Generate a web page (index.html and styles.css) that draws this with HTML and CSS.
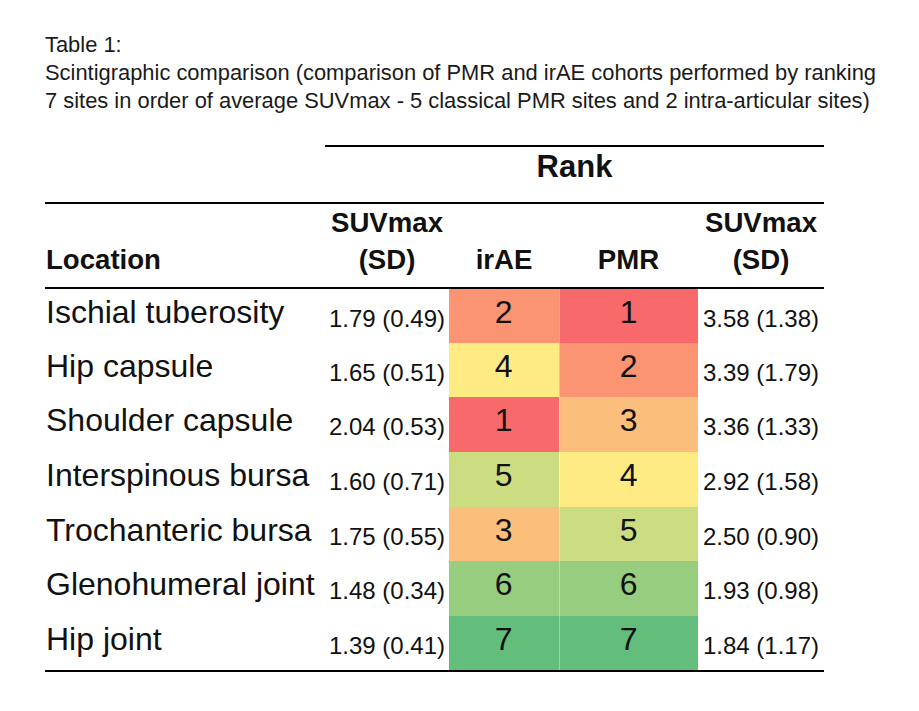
FILE: index.html
```html
<!DOCTYPE html>
<html lang="en">
<head>
<meta charset="utf-8">
<title>Table 1</title>
<link rel="stylesheet" href="styles.css">
</head>
<body>
<div class="caption">
  <div>Table 1:</div>
  <div>Scintigraphic comparison (comparison of PMR and irAE cohorts performed by ranking</div>
  <div>7 sites in order of average SUVmax - 5 classical PMR sites and 2 intra-articular sites)</div>
</div>
<table class="data">
  <colgroup>
    <col class="c-loc">
    <col class="c-suv1">
    <col class="c-irae">
    <col class="c-pmr">
    <col class="c-suv2">
  </colgroup>
  <thead>
    <tr class="spanrow">
      <th class="blank"></th>
      <th class="rank" colspan="4">Rank</th>
    </tr>
    <tr class="headrow">
      <th class="h-loc">Location</th>
      <th>SUVmax<br>(SD)</th>
      <th>irAE</th>
      <th>PMR</th>
      <th>SUVmax<br>(SD)</th>
    </tr>
  </thead>
  <tbody>
    <tr>
      <td class="loc">Ischial tuberosity</td>
      <td class="num">1.79 (0.49)</td>
      <td class="rk r2">2</td>
      <td class="rk pm r1">1</td>
      <td class="num">3.58 (1.38)</td>
    </tr>
    <tr>
      <td class="loc">Hip capsule</td>
      <td class="num">1.65 (0.51)</td>
      <td class="rk r4">4</td>
      <td class="rk pm r2">2</td>
      <td class="num">3.39 (1.79)</td>
    </tr>
    <tr>
      <td class="loc">Shoulder capsule</td>
      <td class="num">2.04 (0.53)</td>
      <td class="rk r1">1</td>
      <td class="rk pm r3">3</td>
      <td class="num">3.36 (1.33)</td>
    </tr>
    <tr>
      <td class="loc">Interspinous bursa</td>
      <td class="num">1.60 (0.71)</td>
      <td class="rk r5">5</td>
      <td class="rk pm r4">4</td>
      <td class="num">2.92 (1.58)</td>
    </tr>
    <tr>
      <td class="loc">Trochanteric bursa</td>
      <td class="num">1.75 (0.55)</td>
      <td class="rk r3">3</td>
      <td class="rk pm r5">5</td>
      <td class="num">2.50 (0.90)</td>
    </tr>
    <tr>
      <td class="loc">Glenohumeral joint</td>
      <td class="num">1.48 (0.34)</td>
      <td class="rk r6">6</td>
      <td class="rk pm r6">6</td>
      <td class="num">1.93 (0.98)</td>
    </tr>
    <tr class="last">
      <td class="loc">Hip joint</td>
      <td class="num">1.39 (0.41)</td>
      <td class="rk r7">7</td>
      <td class="rk pm r7">7</td>
      <td class="num">1.84 (1.17)</td>
    </tr>
  </tbody>
</table>
</body>
</html>
```
FILE: styles.css
```css
html, body {
  margin: 0;
  padding: 0;
  background: #ffffff;
}
body {
  font-family: "Liberation Sans", Arial, sans-serif;
  color: #111111;
}
.caption {
  margin: 31px 0 0 45px;
  font-size: 21.9px;
  line-height: 28px;
  color: #1a1a1a;
}
.data {
  margin: 30px 0 0 45px;
  border-collapse: collapse;
  table-layout: fixed;
  width: 779px;
}
.c-loc { width: 280px; }
.c-suv1 { width: 124px; }
.c-irae { width: 110px; }
.c-pmr { width: 139px; }
.c-suv2 { width: 126px; }

.data th,
.data td {
  padding: 0;
}
.data .spanrow th {
  height: 53px;
  vertical-align: top;
}
.data th.rank {
  border-top: 2px solid #000;
  font-size: 31px;
  font-weight: bold;
  text-align: center;
  line-height: 1.15;
  padding-top: 2px;
}
.data .headrow th {
  border-top: 2px solid #000;
  border-bottom: 2px solid #000;
  height: 74px;
  vertical-align: bottom;
  text-align: center;
  font-size: 27.6px;
  font-weight: bold;
  line-height: 37px;
  padding-bottom: 9px;
}
.data .headrow th.h-loc {
  text-align: left;
  padding-left: 1px;
}
.data tbody tr {
  height: 54.7px;
}
.data tbody td {
  vertical-align: top;
  text-align: center;
}
.data td.loc {
  text-align: left;
  font-size: 32px;
  padding: 5px 0 0 1px;
  white-space: nowrap;
  line-height: 1.15;
}
.data td.num {
  font-size: 24px;
  padding-top: 16px;
  line-height: 1.15;
  white-space: nowrap;
}
.data td.rk {
  font-size: 32px;
  padding-top: 5px;
  line-height: 1.15;
}
.data td.pm {
  border-left: 1px solid rgba(255, 255, 255, 0.35);
}
.data .last td {
  border-bottom: 2px solid #000;
}
.r1 { background: #f8696b; }
.r2 { background: #fa9473; }
.r3 { background: #fcbf7b; }
.r4 { background: #ffeb84; }
.r5 { background: #cbdc81; }
.r6 { background: #97cd7e; }
.r7 { background: #63be7b; }
```
